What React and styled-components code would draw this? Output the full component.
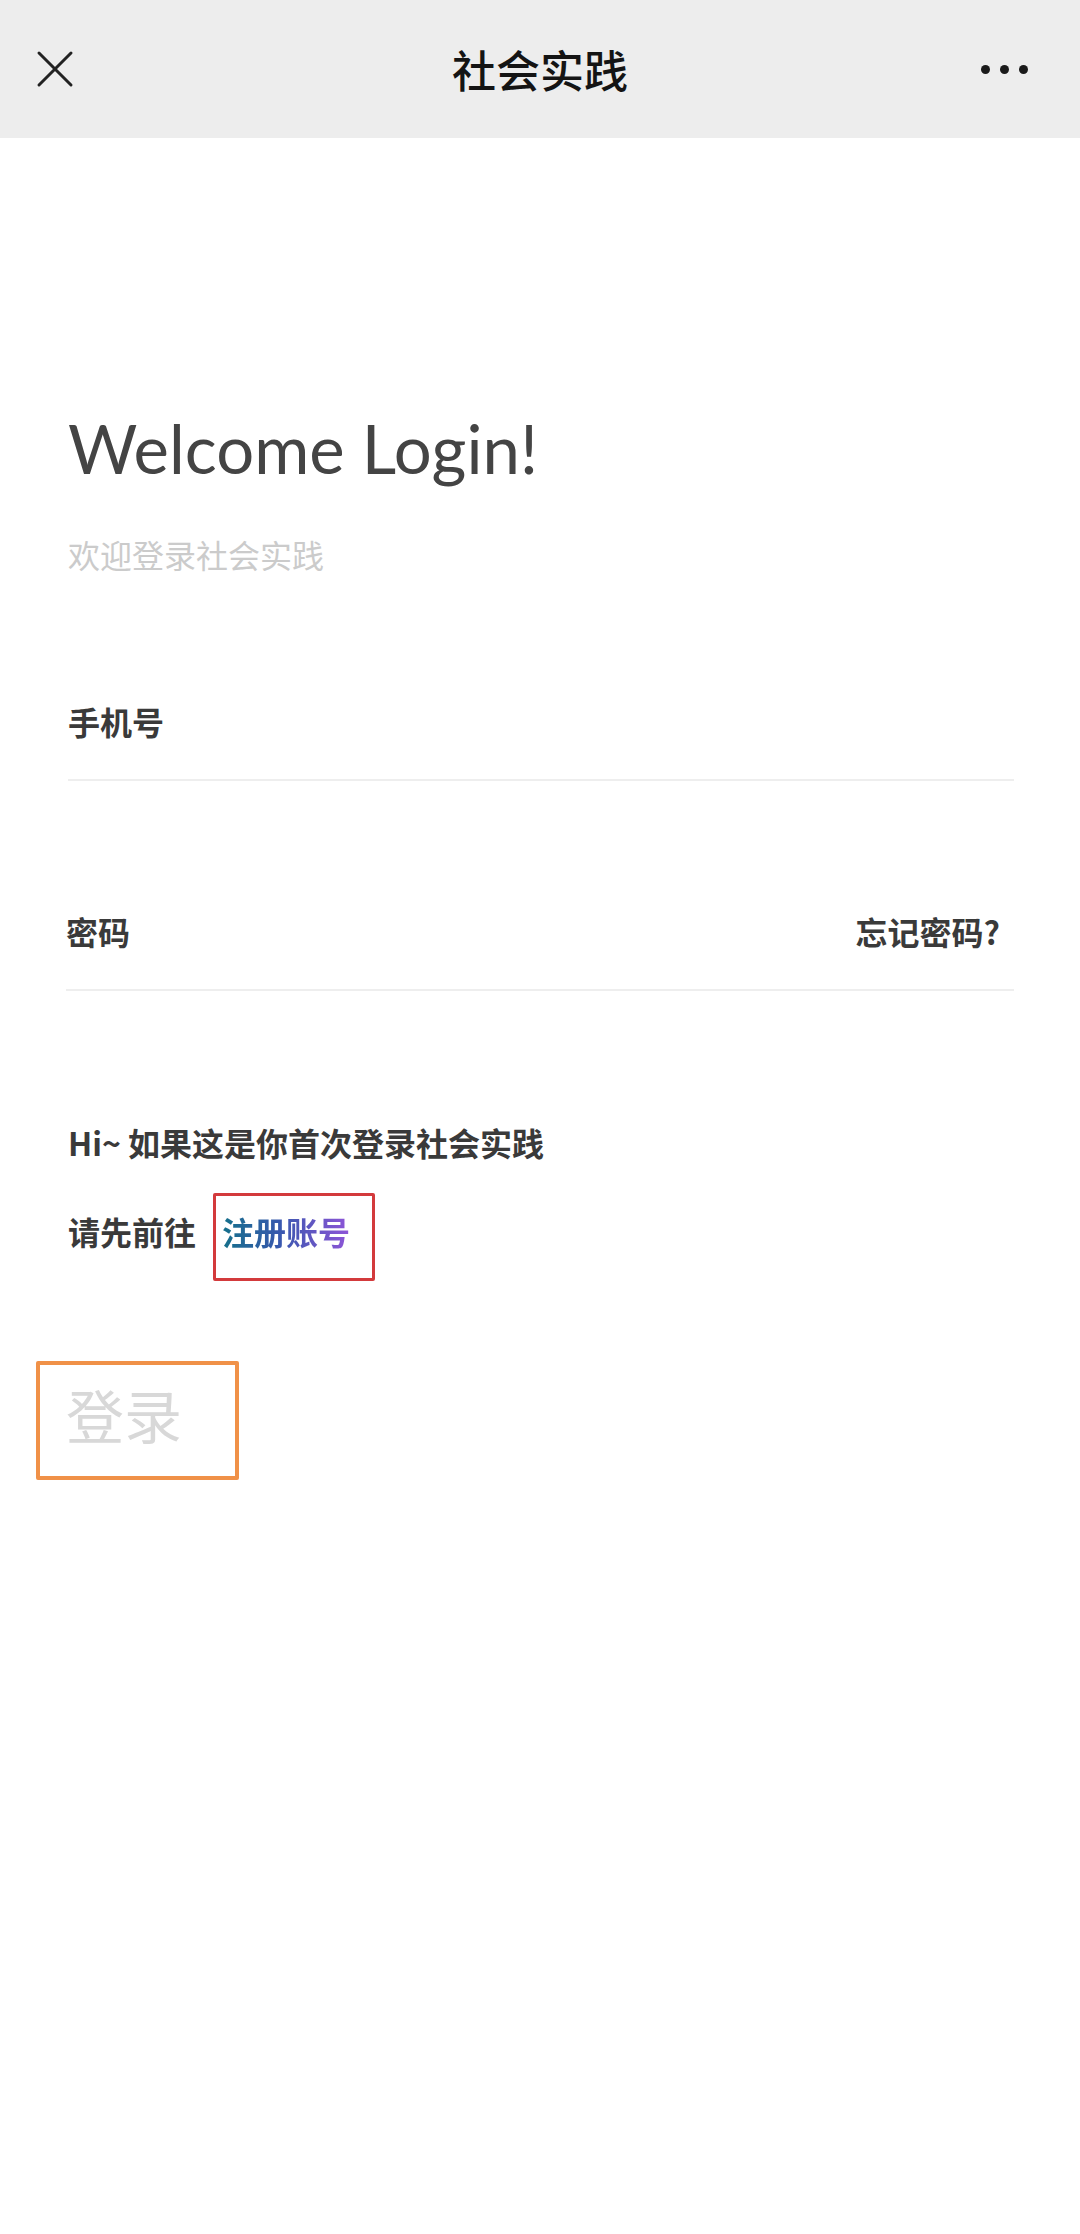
import React from 'react';
import styled, { createGlobalStyle } from 'styled-components';

const GlobalStyle = createGlobalStyle`
  body {
    margin: 0;
    background: #ffffff;
    font-family: "Noto Sans", "Noto Sans CJK SC", sans-serif;
  }
`;

const Page = styled.div`
  width: 1080px;
  min-height: 2234px;
  background: #ffffff;
`;

const NavBar = styled.header`
  height: 138px;
  background: #ededed;
  display: grid;
  grid-template-columns: 1fr auto 1fr;
  align-items: center;
`;

const NavLeft = styled.div`
  justify-self: start;
  padding-left: 36px;
  display: flex;
  align-items: center;
`;

const NavRight = styled.div`
  justify-self: end;
  padding-right: 52px;
  display: flex;
  align-items: center;
  gap: 10px;
`;

const NavTitle = styled.h1`
  margin: 0;
  font-family: "Noto Sans CJK SC", sans-serif;
  font-size: 44px;
  font-weight: 500;
  color: #141414;
  line-height: 1;
`;

const Dot = styled.span`
  width: 9px;
  height: 9px;
  border-radius: 50%;
  background: #1a1a1a;
`;

const Content = styled.main`
  padding: 267px 66px 0 68px;
`;

const Welcome = styled.h2`
  margin: 0;
  font-family: Lato, "Noto Sans", sans-serif;
  font-size: 67px;
  font-weight: 400;
  line-height: 86px;
  color: #444444;
`;

const Subtitle = styled.p`
  margin: 43px 0 0;
  font-family: "Noto Sans CJK SC", sans-serif;
  font-size: 32px;
  line-height: 40px;
  color: #cbcbcb;
`;

const Field = styled.div`
  margin-top: ${(props) => props.gap}px;
  padding-bottom: 38px;
  border-bottom: 2px solid #eeeeee;
  display: flex;
  justify-content: space-between;
  align-items: center;
  margin-left: ${(props) => (props.shift ? -2 : 0)}px;
`;

const Label = styled.span`
  font-family: "Noto Sans CJK SC", sans-serif;
  font-size: 32px;
  font-weight: 700;
  line-height: 40px;
  color: #3a3a3a;
`;

const Forgot = styled(Label)`
  padding-right: 14px;
`;

const Hint = styled.p`
  margin: 131px 0 0;
  font-family: "Noto Sans CJK SC", sans-serif;
  font-size: 32px;
  font-weight: 700;
  line-height: 40px;
  color: #3a3a3a;
`;

const RegisterRow = styled.div`
  margin-top: 31px;
  display: flex;
  align-items: baseline;
`;

const RegisterBox = styled.a`
  margin-left: 17px;
  width: 162px;
  box-sizing: border-box;
  padding: 15px 0 27px 6px;
  border: 3px solid #d33a3c;
  border-radius: 2px;
  text-decoration: none;
`;

const RegisterText = styled.span`
  font-family: "Noto Sans CJK SC", sans-serif;
  font-size: 32px;
  font-weight: 700;
  line-height: 40px;
  background: linear-gradient(90deg, #15708a 0%, #3858ae 45%, #8f55d8 100%);
  -webkit-background-clip: text;
  background-clip: text;
  color: transparent;
`;

const LoginButton = styled.button`
  margin: 80px 0 0 -32px;
  width: 203px;
  height: 119px;
  box-sizing: border-box;
  padding: 0 0 14px 26px;
  display: flex;
  align-items: center;
  background: #ffffff;
  border: 4px solid #f09148;
  border-radius: 2px;
  font-family: "Noto Sans CJK SC", sans-serif;
  font-size: 58px;
  font-weight: 400;
  color: #d8d8d8;
  cursor: pointer;
`;

const CloseIcon = () => (
  <svg width="38" height="38" viewBox="0 0 38 38">
    <path d="M3 3 L35 35 M35 3 L3 35" stroke="#222" strokeWidth="3" strokeLinecap="round" fill="none" />
  </svg>
);

const App = () => (
  <Page>
    <GlobalStyle />
    <NavBar>
      <NavLeft>
        <CloseIcon />
      </NavLeft>
      <NavTitle>社会实践</NavTitle>
      <NavRight>
        <Dot />
        <Dot />
        <Dot />
      </NavRight>
    </NavBar>
    <Content>
      <Welcome>Welcome Login!</Welcome>
      <Subtitle>欢迎登录社会实践</Subtitle>
      <Field gap={127}>
        <Label>手机号</Label>
      </Field>
      <Field gap={130} shift>
        <Label>密码</Label>
        <Forgot>忘记密码?</Forgot>
      </Field>
      <Hint>Hi~ 如果这是你首次登录社会实践</Hint>
      <RegisterRow>
        <Label>请先前往</Label>
        <RegisterBox href="#">
          <RegisterText>注册账号</RegisterText>
        </RegisterBox>
      </RegisterRow>
      <LoginButton>登录</LoginButton>
    </Content>
  </Page>
);

export default App;
